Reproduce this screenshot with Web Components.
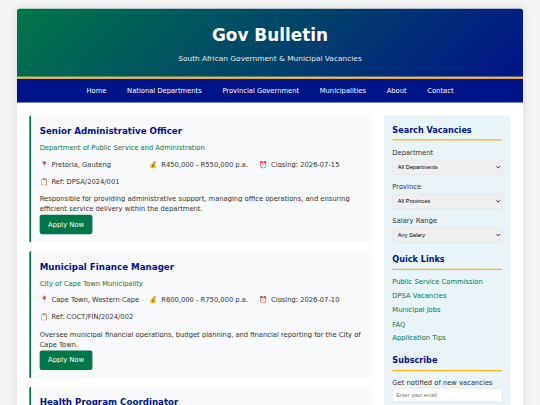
<!DOCTYPE html>
<html lang="en">
<head>
<meta charset="UTF-8">
<title>Gov Bulletin</title>
<style>
    html {
        overflow: hidden;
        background: #f5f5f5;
    }
    body {
        margin: 0;
        width: 540px;
        height: 405px;
        overflow: hidden;
        font-family: "DejaVu Sans", Verdana, sans-serif;
        line-height: 1.6;
        color: #333;
        --green: #007749;
        --blue: #001489;
        --gold: #ffb81c;
    }
</style>
</head>
<body>
<gov-page>
    <gov-header slot="header" heading="Gov Bulletin">South African Government &amp; Municipal Vacancies</gov-header>
    <gov-nav slot="nav">
        <a href="#">Home</a>
        <a href="#">National Departments</a>
        <a href="#">Provincial Government</a>
        <a href="#">Municipalities</a>
        <a href="#">About</a>
        <a href="#">Contact</a>
    </gov-nav>
    <job-card heading="Senior Administrative Officer" department="Department of Public Service and Administration"
        place="Pretoria, Gauteng" salary="R450,000 - R550,000 p.a." closing="2026-07-15" ref="DPSA/2024/001">
        Responsible for providing administrative support, managing office operations, and ensuring efficient service delivery within the department.
    </job-card>
    <job-card heading="Municipal Finance Manager" department="City of Cape Town Municipality"
        place="Cape Town, Western Cape" salary="R600,000 - R750,000 p.a." closing="2026-07-10" ref="COCT/FIN/2024/002">
        Oversee municipal financial operations, budget planning, and financial reporting for the City of Cape Town.
    </job-card>
    <job-card heading="Health Program Coordinator"></job-card>
    <side-section slot="side" heading="Search Vacancies">
        <select-field label="Department" value="All Departments"></select-field>
        <select-field label="Province" value="All Provinces"></select-field>
        <select-field label="Salary Range" value="Any Salary"></select-field>
    </side-section>
    <side-section slot="side" heading="Quick Links">
        <quick-links>
            <a href="#">Public Service Commission</a>
            <a href="#">DPSA Vacancies</a>
            <a href="#">Municipal Jobs</a>
            <a href="#">FAQ</a>
            <a href="#">Application Tips</a>
        </quick-links>
    </side-section>
    <side-section slot="side" heading="Subscribe">
        <subscribe-field></subscribe-field>
    </side-section>
</gov-page>
<script>
class GovElement extends HTMLElement {
    connectedCallback() {
        if (this.shadowRoot) return;
        this.attachShadow({mode: 'open'});
        this.shadowRoot.innerHTML = `<style>* { box-sizing: border-box; margin: 0; }</style>` + this.render();
    }

    attr(name) {
        return this.getAttribute(name) || "";
    }
}

class GovPage extends GovElement {
    render() {
        // The desktop layout is 1280px wide, shown as a scaled preview
        return `
            <style>
                :host {
                    display: block;
                    width: 1280px;
                    height: 960px;
                    padding-top: 20px;
                    box-sizing: border-box;
                    overflow: hidden;
                    transform: scale(0.421875);
                    transform-origin: 0 0;
                }
                .container {
                    width: 1200px;
                    margin: 0 auto;
                    background: #fff;
                    border-radius: 8px;
                    overflow: hidden;
                    box-shadow: 0 0 20px rgba(0, 0, 0, 0.1);
                }
                main {
                    display: grid;
                    grid-template-columns: 1fr 300px;
                    gap: 30px;
                    padding: 30px;
                }
                aside {
                    background: #e8f4f8;
                    padding: 20px;
                    border-radius: 8px;
                }
            </style>
            <div class="container">
                <slot name="header"></slot>
                <slot name="nav"></slot>
                <main>
                    <section><slot></slot></section>
                    <aside><slot name="side"></slot></aside>
                </main>
            </div>
        `;
    }
}

class GovHeader extends GovElement {
    render() {
        return `
            <style>
                :host {
                    display: block;
                    padding: 30px;
                    text-align: center;
                    color: #fff;
                    background: linear-gradient(135deg, var(--green) 0%, var(--blue) 100%);
                    border-bottom: 5px solid var(--gold);
                }
                h1 { font-size: 40px; margin-bottom: 10px; }
                p { font-size: 17.6px; opacity: 0.9; }
            </style>
            <h1>${this.attr("heading")}</h1>
            <p><slot></slot></p>
        `;
    }
}

class GovNav extends GovElement {
    render() {
        return `
            <style>
                :host { display: block; padding: 16px 30px 14px; background: var(--blue); }
                nav { display: flex; justify-content: center; gap: 29px; }
                ::slotted(a) {
                    color: #fff;
                    text-decoration: none;
                    font-weight: 500;
                    padding: 0 10px;
                }
            </style>
            <nav><slot></slot></nav>
        `;
    }
}

class JobCard extends GovElement {
    render() {
        return `
            <style>
                :host {
                    display: block;
                    margin: 0 0 20px -1px;
                    padding: 20px;
                    min-height: 302px;
                    box-sizing: border-box;
                    background: #f8f9fa;
                    border-left: 5px solid var(--green);
                    border-radius: 5px;
                }
                h3 { font-size: 20.6px; line-height: 33.3px; color: var(--blue); padding-top: 1px; margin-bottom: 10px; }
                .department { color: var(--green); margin-bottom: 14px; }
                .details {
                    display: grid;
                    grid-template-columns: repeat(auto-fit, minmax(200px, 1fr));
                    gap: 15px;
                    margin-bottom: 15px;
                }
                .details div { display: flex; gap: 8px; white-space: nowrap; }
                .apply {
                    display: inline-block;
                    padding: 10px 20px;
                    border-radius: 5px;
                    background: var(--green);
                    color: #fff;
                    text-decoration: none;
                }
            </style>
            <h3>${this.attr("heading")}</h3>
            ${this.hasAttribute("department") ? this.body() : ""}
        `;
    }

    body() {
        return `
            <div class="department">${this.attr("department")}</div>
            <div class="details">
                <div><span>📍</span><span>${this.attr("place")}</span></div>
                <div><span>💰</span><span>${this.attr("salary")}</span></div>
                <div><span>⏰</span><span>Closing: ${this.attr("closing")}</span></div>
                <div><span>📋</span><span>Ref: ${this.attr("ref")}</span></div>
            </div>
            <p><slot></slot></p>
            <a class="apply" href="#">Apply Now</a>
        `;
    }
}

class SideSection extends GovElement {
    render() {
        return `
            <style>
                :host { display: block; margin-bottom: 24px; }
                h3 {
                    font-size: 19.2px;
                    line-height: 30.7px;
                    color: var(--blue);
                    margin-bottom: 15px;
                    padding-top: 1px;
                    padding-bottom: 6px;
                    border-bottom: 3px solid var(--gold);
                }
            </style>
            <h3>${this.attr("heading")}</h3>
            <slot></slot>
        `;
    }
}

class SelectField extends GovElement {
    render() {
        return `
            <style>
                :host { display: block; margin-bottom: 15px; }
                label { display: block; padding-top: 1px; margin-bottom: 4px; }
                select {
                    display: block;
                    width: 100%;
                    padding: 8px;
                    border: 1px solid #ddd;
                    border-radius: 4px;
                    background: #efefef;
                    font: 13.333px "Liberation Sans", Arial, sans-serif;
                }
            </style>
            <label>${this.attr("label")}</label>
            <select><option>${this.attr("value")}</option></select>
        `;
    }
}

class QuickLinks extends GovElement {
    render() {
        return `
            <style>
                :host { display: flex; flex-direction: column; gap: 8px; }
                ::slotted(a) { color: var(--green); text-decoration: none; }
            </style>
            <slot></slot>
        `;
    }
}

class SubscribeField extends GovElement {
    render() {
        return `
            <style>
                :host { display: block; }
                input {
                    display: block;
                    width: 100%;
                    padding: 8px;
                    border: 1px solid #ddd;
                    border-radius: 4px;
                    font: 13.333px "Liberation Sans", Arial, sans-serif;
                }
            </style>
            <label>Get notified of new vacancies</label>
            <input type="email" placeholder="Enter your email">
        `;
    }
}

customElements.define("gov-page", GovPage);
customElements.define("gov-header", GovHeader);
customElements.define("gov-nav", GovNav);
customElements.define("job-card", JobCard);
customElements.define("side-section", SideSection);
customElements.define("select-field", SelectField);
customElements.define("quick-links", QuickLinks);
customElements.define("subscribe-field", SubscribeField);
</script>
</body>
</html>
